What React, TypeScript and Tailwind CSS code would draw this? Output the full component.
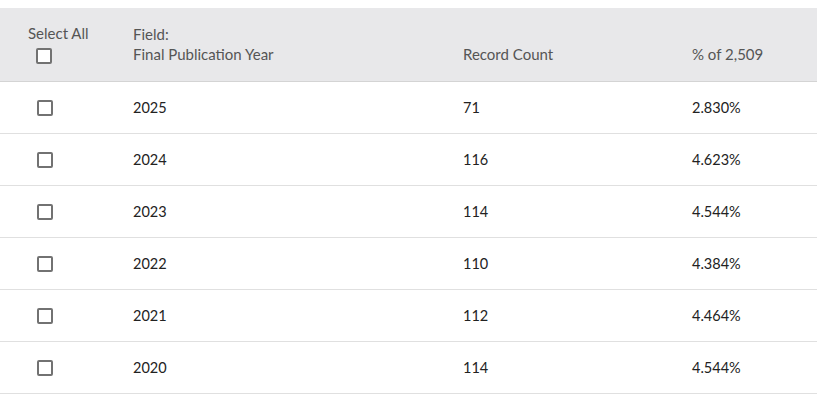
const rows = [
  { year: "2025", count: "71", pct: "2.830%" },
  { year: "2024", count: "116", pct: "4.623%" },
  { year: "2023", count: "114", pct: "4.544%" },
  { year: "2022", count: "110", pct: "4.384%" },
  { year: "2021", count: "112", pct: "4.464%" },
  { year: "2020", count: "114", pct: "4.544%" },
];

function Checkbox() {
  return (
    <span className="block w-4 h-4 border-2 border-[#727272] rounded-[2px] bg-white" />
  );
}

export default function App() {
  return (
    <div
      className="w-[817px] h-[398px] bg-white pt-2 overflow-hidden"
      style={{ fontFamily: "Lato, 'Noto Sans', sans-serif" }}
    >
      <div className="flex h-[74px] bg-[#e8e8ea] border-b border-[#d4d4d4] text-[15px] text-[#555]">
        <div className="w-[133px] pl-[28px] pt-[16px]">
          <div className="leading-[19px]">Select All</div>
          <div className="mt-[5px] ml-[8px]">
            <Checkbox />
          </div>
        </div>
        <div className="w-[330px] pt-[16px] leading-[20px]">
          <div>Field:</div>
          <div>Final Publication Year</div>
        </div>
        <div className="w-[229px] pt-[36px] leading-[20px]">Record Count</div>
        <div className="flex-1 pt-[36px] leading-[20px]">% of 2,509</div>
      </div>
      {rows.map((r) => (
        <div
          key={r.year}
          className="flex items-center h-[52px] border-b border-[#e0e0e0] text-[14.5px] text-[#222]"
        >
          <div className="w-[133px] pl-[37px]">
            <Checkbox />
          </div>
          <div className="w-[330px]">{r.year}</div>
          <div className="w-[229px]">{r.count}</div>
          <div className="flex-1">{r.pct}</div>
        </div>
      ))}
    </div>
  );
}
